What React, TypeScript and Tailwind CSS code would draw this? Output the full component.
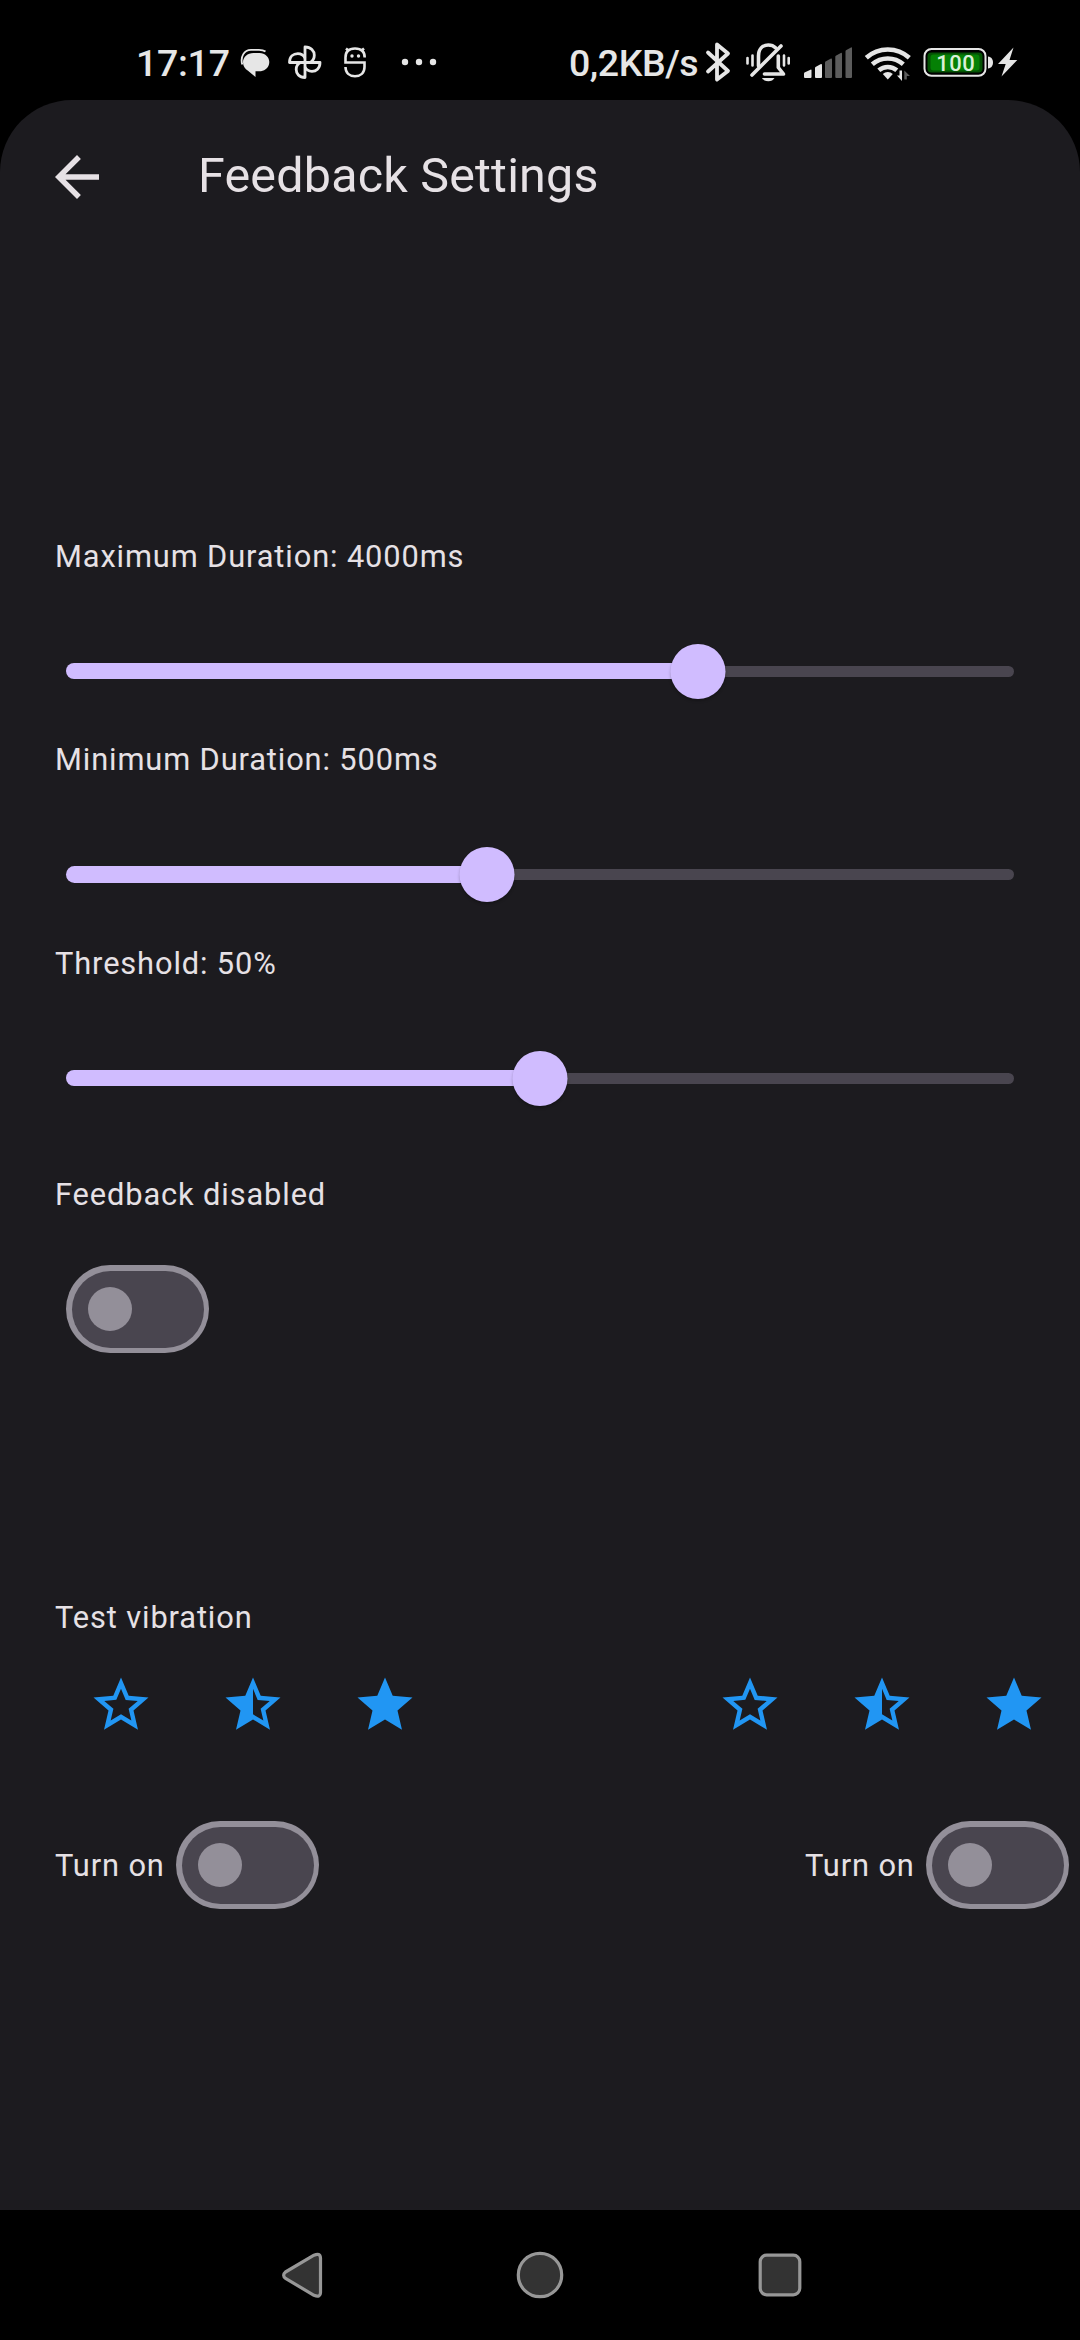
import React from "react";

const STAR =
  "M12 17.27L18.18 21l-1.64-7.03L22 9.24l-7.19-.61L12 2 9.19 8.63 2 9.24l5.46 4.73L5.82 21z";
const STAR_OUTLINE =
  "M22 9.24l-7.19-.62L12 2 9.19 8.63 2 9.24l5.46 4.73L5.82 21 12 17.27 18.18 21l-1.63-7.03L22 9.24zM12 15.4l-3.76 2.27 1-4.28-3.32-2.88 4.38-.38L12 6.1l1.71 4.04 4.38.38-3.32 2.88 1 4.28L12 15.4z";
const STAR_HALF =
  "M22 9.24l-7.19-.62L12 2 9.19 8.63 2 9.24l5.46 4.73L5.82 21 12 17.27 18.18 21l-1.63-7.03L22 9.24zM12 15.4V6.1l1.71 4.04 4.38.38-3.32 2.88 1 4.28L12 15.4z";

function StatusBar() {
  return (
    <header className="flex h-[100px] shrink-0 items-start bg-black text-[#e6e6e6]">
      <span className="ml-[136px] mt-[41px] w-[96px] whitespace-nowrap text-[37.5px] font-medium leading-[44px] tracking-[-0.3px]">
        17:17
      </span>
      {/* notification icons */}
      <svg className="h-[100px] w-[218px] shrink-0" viewBox="232 0 218 100" fill="#e6e6e6">
        <path d="M242.300 64.500C240 57 244 49.800 251 49.800h8c3 0 5 .7 6.500 1.800" fill="none" stroke="#e6e6e6" strokeWidth="1.800" />
        <path d="M253.500 53h6c5.500 0 9.800 4 9.800 9s-3.800 8.500-8.300 9.200h-5.500V77l-7.500-6.300c-3-1.700-5-4.700-5-8.500 0-5 4.500-9.200 10.500-9.200z" />
        <g fill="none" stroke="#e6e6e6" strokeWidth="2.800" strokeLinejoin="round">
          <path d="M305 62.500V47c6 0 9.300 4 9.300 8.300 0 3.500-2 6-4.300 7.200" />
          <path d="M305 62.500h15c0 6-4 8.800-8 8.800-3.500 0-6-2-7-4.300" />
          <path d="M305 62.500V77.500c-6 0-8.800-4-8.800-8 0-3.500 2-6 4.300-7" />
          <path d="M305 62.500H289.500c0-6 4-8.800 8.300-8.800 3.500 0 6 2 7.200 4.300" />
        </g>
        <g fill="none" stroke="#e6e6e6" strokeWidth="2.600">
          <path d="M364.700 57.500C364.700 51 361 48.500 355 48.500s-9.500 3-9.500 9V62.500H364.500V67c0 6-4 9.200-9.500 9.200s-9.500-3.200-9.500-9.200" />
          <path d="M346 48.500l3 2.500M364 48.500l-3 2.500" />
        </g>
        <circle cx="352" cy="56" r="1.700" />
        <circle cx="358.500" cy="56" r="1.700" />
        <circle cx="405" cy="62" r="3.200" />
        <circle cx="419" cy="62" r="3.200" />
        <circle cx="433" cy="62" r="3.200" />
      </svg>
      <span className="ml-[119px] mt-[41px] w-[131px] whitespace-nowrap text-[37.5px] font-medium leading-[44px] tracking-[-0.45px]">
        0,2KB/s
      </span>
      {/* system icons */}
      <svg className="h-[100px] w-[380px] shrink-0" viewBox="700 0 380 100" fill="#e6e6e6">
        <path
          d="M708 52.500L728 71 717 79.500V44.500L728 53.500 708 71.500"
          fill="none" stroke="#e6e6e6" strokeWidth="3.800" strokeLinejoin="round" strokeLinecap="round"
        />
        <g fill="none" stroke="#e6e6e6" strokeWidth="3.600" strokeLinecap="round">
          <path d="M758.500 66V56c0-7 4-11 9.800-11 3.200 0 5.500 1 7.200 2.800" />
          <path d="M778.300 56v11.500l5.200 6.500H764.500" strokeLinejoin="round" />
          <path d="M752 75L781 46" />
          <path d="M747.500 58v5.500M752.500 55.500v10M784 55.500v10M788.700 58v5.500" strokeWidth="2.600" />
        </g>
        <path d="M762 78h12.500c-1 2-3.500 3.300-6.200 3.300s-5.300-1.300-6.300-3.300z" />
        <path d="M804.500 72.500l6.500-3q.5 0 .5 1v6.500q0 1-1 1h-5.500q-1 0-1-1v-3.500q0-.7.5-1z" />
        <path d="M815.500 67l5-2.800q1.500-.7 1.500 1V77q0 1-1 1h-5q-1 0-1-1v-9q0-.7.500-1z" />
        <g fill="#5c5c5c">
          <path d="M825.500 61.500l5-2.800q1.500-.7 1.500 1V77q0 1-1 1h-5q-1 0-1-1V62.500q0-.7.500-1z" />
          <path d="M835.800 55.800l5-2.800q1.200-.7 1.200 1V77q0 1-1 1h-4.700q-1 0-1-1V56.800q0-.7.500-1z" />
          <path d="M846 50.200l5-2.800q1-.7 1 1V77q0 1-1 1h-4.500q-1 0-1-1V51.200q0-.7.500-1z" />
        </g>
        <g fill="none" stroke="#e6e6e6" strokeWidth="4.600">
          <path d="M866.300 57.800A32 32 0 0 1 909.300 57.800" />
          <path d="M872.300 64.300A23.500 23.500 0 0 1 903.300 64.300" />
          <path d="M878.800 70.300A14 14 0 0 1 896.800 70.300" />
        </g>
        <path d="M887.800 79.500l-5-5.500a7.400 7.400 0 0 1 10 0z" />
        <path d="M899.500 70.500h2.500V81l-5-5.500h2.500z" />
        <path d="M904.300 79.500V70.500l5.700 5.500h-3.200v3.500z" fill="#5c5c5c" />
        <rect x="924.500" y="49" width="61" height="26.800" rx="7" fill="#000" stroke="#e6e6e6" strokeWidth="2" />
        <rect x="927.500" y="52.500" width="55" height="20" rx="4" fill="#045204" />
        <rect x="930.500" y="54.500" width="49" height="16" rx="3" fill="#058005" />
        <path d="M988 56.500c3.500.5 5 3 5 6s-1.500 5.500-5 6z" />
        <text x="955.800" y="70.700" textAnchor="middle" fontSize="22" fontWeight="500" letterSpacing="0.600" fill="#d9f0d9">100</text>
        <path d="M1013.500 47.500L998 64h7.700l-4.200 12.500L1017.300 60h-7.800z" />
      </svg>
    </header>
  );
}

function Slider({ label, fraction }: { label: string; fraction: number }) {
  const percent = `${fraction * 100}%`;
  return (
    <div className="h-[203.5px]">
      <p className="pl-[55px] leading-[44px]">{label}</p>
      <div className="mx-[66px] mt-[26.5px] flex h-[132px] items-center">
        <div className="relative flex h-[55px] w-full items-center">
          <div className="h-[16.5px] rounded-l-full bg-[#d0bcff]" style={{ width: percent }} />
          <div className="h-[11px] flex-1 rounded-r-full bg-[#49454f]" />
          <div
            className="absolute top-0 size-[55px] -translate-x-1/2 rounded-full bg-[#d0bcff] shadow-[0_2px_3px_rgba(0,0,0,0.25)]"
            style={{ left: percent }}
          />
        </div>
      </div>
    </div>
  );
}

function Toggle() {
  return (
    <div className="h-[88px] w-[143px] shrink-0 rounded-full bg-[#938f99] p-[5.5px]">
      <div className="flex h-full w-full items-center rounded-full bg-[#49454f] pl-[16.5px]">
        <div className="size-[44px] rounded-full bg-[#938f99]" />
      </div>
    </div>
  );
}

function StarRow() {
  return (
    <div className="flex">
      {[STAR_OUTLINE, STAR_HALF, STAR].map((d) => (
        <button key={d} className="flex size-[132px] items-center justify-center">
          <svg className="size-[66px]" viewBox="0 0 24 24" fill="#2196f3">
            <path d={d} />
          </svg>
        </button>
      ))}
    </div>
  );
}

function TurnOn() {
  return (
    <div className="flex items-center">
      <span className="w-[121px] whitespace-nowrap pt-px leading-[44px]">Turn on</span>
      <Toggle />
    </div>
  );
}

function NavBar() {
  return (
    <nav className="flex h-[130px] shrink-0 items-center justify-center gap-[180px] bg-black">
      {["back", "home", "recents"].map((name) => (
        <svg key={name} className="size-[60px]" viewBox="0 0 60 60" fill="#333333" stroke="#979797" strokeWidth="3.200" strokeLinejoin="round">
          {name === "back" && (
            <path d="M44 10.200L15.500 27Q11.800 30.200 15.500 33.400L44 50.300Q50.200 53 50.500 47.500V13Q50.200 7.500 44 10.200Z" />
          )}
          {name === "home" && <circle cx="30" cy="30" r="21.700" />}
          {name === "recents" && <rect x="10.200" y="10.200" width="39.600" height="39.600" rx="6.500" />}
        </svg>
      ))}
    </nav>
  );
}

export default function App() {
  return (
    <div className="flex h-[2340px] w-[1080px] flex-col overflow-hidden bg-black font-['Roboto',sans-serif]">
      <StatusBar />
      <main className="flex h-[2110px] flex-col rounded-t-[72px] bg-[#1c1b1f] text-[30.8px] tracking-[0.88px] text-[#e6e1e5]">
        <div className="flex h-[154px] items-center pl-[44px]">
          <svg className="size-[66px]" viewBox="0 0 24 24" fill="#e6e1e5">
            <path d="M20 11H7.830l5.590-5.590L12 4l-8 8 8 8 1.410-1.410L7.830 13H20v-2z" />
          </svg>
          <h1 className="mb-[2px] ml-[88px] text-[48.4px] leading-[62px] tracking-[0.22px]">Feedback Settings</h1>
        </div>
        <div className="mt-[280.500px]">
          <Slider label="Maximum Duration: 4000ms" fraction={2 / 3} />
          <Slider label="Minimum Duration: 500ms" fraction={4 / 9} />
          <Slider label="Threshold: 50%" fraction={0.5} />
        </div>
        <p className="mt-[28px] pl-[55px] leading-[44px]">Feedback disabled</p>
        <div className="ml-[66px] mt-[48px]">
          <Toggle />
        </div>
        <p className="mt-[243px] pl-[55px] leading-[44px]">Test vibration</p>
        <div className="-mt-px flex justify-between pl-[55px]">
          <StarRow />
          <StarRow />
        </div>
        <div className="mt-[50px] flex justify-between pl-[55px] pr-[11px]">
          <TurnOn />
          <TurnOn />
        </div>
      </main>
      <NavBar />
    </div>
  );
}
